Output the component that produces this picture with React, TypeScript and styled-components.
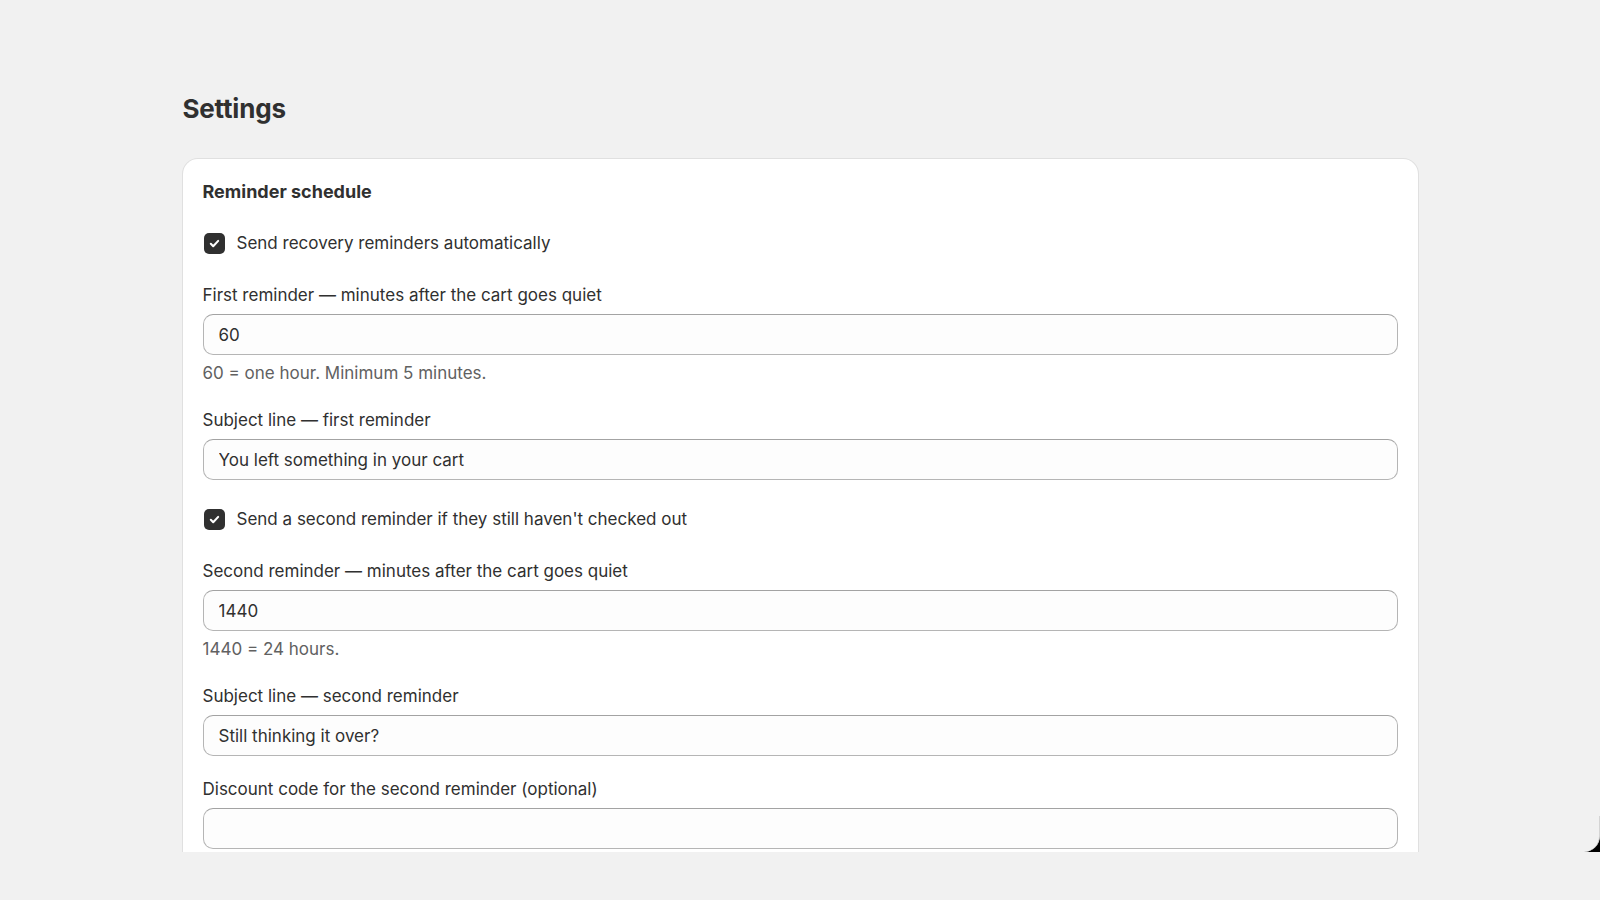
import styled, { createGlobalStyle } from 'styled-components';

const GlobalStyle = createGlobalStyle`
  html, body {
    margin: 0;
    padding: 0;
    background: #f1f1f1;
  }
  body {
    font-family: Inter, "Noto Sans", "Liberation Sans", sans-serif;
    color: #303030;
    -webkit-font-smoothing: antialiased;
  }
  * { box-sizing: border-box; }
`;

const Viewport = styled.div`
  position: relative;
  height: 852px;
  overflow: hidden;
  background: #f1f1f1;
`;

const Page = styled.main`
  width: 1235px;
  margin: 0 auto;
  padding-top: 94px;
`;

const Title = styled.h1`
  margin: 0 0 35px;
  font-size: 26px;
  line-height: 30px;
  font-weight: 700;
  letter-spacing: -0.2px;
  color: #303030;
`;

const Card = styled.section`
  background: #ffffff;
  border-radius: 15px;
  padding: 20px 20px 20px;
  box-shadow: 0 0 0 1px rgba(0, 0, 0, 0.07), 0 1px 0 rgba(26, 26, 26, 0.07);
  display: flex;
  flex-direction: column;
`;

const CardHeading = styled.h2`
  margin: 0;
  font-size: 18px;
  line-height: 25px;
  font-weight: 650;
  color: #303030;
`;

const Block = styled.div<{ $space: number }>`
  margin-top: ${(p) => p.$space}px;
`;

const CheckRow = styled.label`
  display: flex;
  align-items: center;
  gap: 12px;
  height: 25px;
  padding-left: 1px;
  font-size: 17px;
  line-height: 25px;
  cursor: pointer;
`;

const Box = styled.span<{ $on: boolean }>`
  width: 21px;
  height: 21px;
  border-radius: 5px;
  flex: none;
  display: grid;
  place-items: center;
  background: ${(p) => (p.$on ? '#303030' : '#fdfdfd')};
  border: ${(p) => (p.$on ? 'none' : '1px solid #8a8a8a')};
`;

const Label = styled.div`
  font-size: 17px;
  line-height: 25px;
  color: #303030;
`;

const Input = styled.input`
  display: block;
  width: 100%;
  height: 41px;
  margin-top: 6px;
  padding: 0 15px;
  border: 1px solid #b5b5b5;
  border-top-color: #a3a3a3;
  border-radius: 10px;
  background: #fdfdfd;
  font: inherit;
  font-size: 17px;
  color: #303030;
  outline: none;
`;

const Help = styled.div`
  margin-top: 6px;
  font-size: 17px;
  line-height: 25px;
  color: #616161;
`;

/* dark frame corner peeking in at the bottom right */
const FrameCorner = styled.div`
  position: absolute;
  right: 0;
  bottom: 0;
  width: 22px;
  height: 36px;
  background: #000;
`;

const FrameFill = styled.div`
  width: 100%;
  height: 100%;
  background: #f1f1f1;
  border-right: 1px solid #d4d4d4;
  border-bottom-right-radius: 16px;
`;

type FieldProps = { label: string; value: string; help?: string };

const Field = ({ label, value, help }: FieldProps) => (
  <>
    <Label>{label}</Label>
    <Input defaultValue={value} />
    {help && <Help>{help}</Help>}
  </>
);

const Check = ({ label }: { label: string }) => (
  <CheckRow>
    <Box $on>
      <svg width="13" height="13" viewBox="0 0 12 12" fill="none">
        <path d="M2.6 6.3l2.2 2.2 4.6-4.9" stroke="#fff" strokeWidth="1.9" strokeLinecap="round" strokeLinejoin="round" />
      </svg>
    </Box>
    {label}
  </CheckRow>
);

export default function App() {
  return (
    <>
      <GlobalStyle />
      <Viewport>
        <Page>
          <Title>Settings</Title>
          <Card>
            <CardHeading>Reminder schedule</CardHeading>
            <Block $space={27}>
              <Check label="Send recovery reminders automatically" />
            </Block>
            <Block $space={27}>
              <Field
                label="First reminder — minutes after the cart goes quiet"
                value="60"
                help="60 = one hour. Minimum 5 minutes."
              />
            </Block>
            <Block $space={22}>
              <Field label="Subject line — first reminder" value="You left something in your cart" />
            </Block>
            <Block $space={27}>
              <Check label="Send a second reminder if they still haven't checked out" />
            </Block>
            <Block $space={27}>
              <Field
                label="Second reminder — minutes after the cart goes quiet"
                value="1440"
                help="1440 = 24 hours."
              />
            </Block>
            <Block $space={22}>
              <Field label="Subject line — second reminder" value="Still thinking it over?" />
            </Block>
            <Block $space={21}>
              <Field label="Discount code for the second reminder (optional)" value="" />
            </Block>
          </Card>
        </Page>
        <FrameCorner>
          <FrameFill />
        </FrameCorner>
      </Viewport>
    </>
  );
}
